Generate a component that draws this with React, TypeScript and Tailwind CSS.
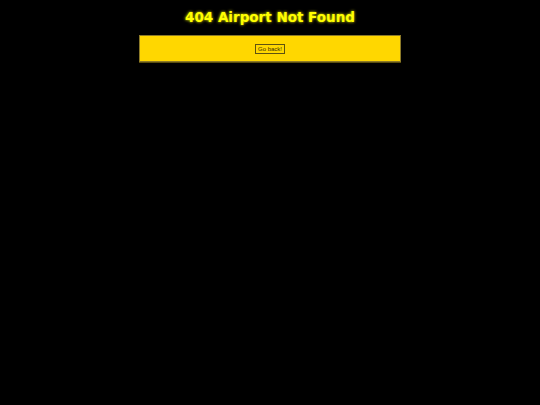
import React from 'react'

export default function App() {
  return (
    <div className="min-h-[405px] w-full bg-black pt-[7px]" style={{ fontFamily: '"DejaVu Sans", Verdana, sans-serif' }}>
      <h1 className="text-center text-[13.5px] font-bold leading-[21px] text-[#ffff00] [text-shadow:0_0_3px_#ffff00]">
        404 Airport Not Found
      </h1>
      <div className="mx-auto mt-[7px] flex h-[27px] w-[262px] items-center justify-center border border-[#8c7a28] bg-[#ffd700] shadow-[0_1px_0_#5a4d10]">
        <button
          className="h-[10px] border border-[#5f5210] bg-[#ffd700] px-[2px] text-[6px] leading-[8px] text-[#3a3000]"
          style={{ fontFamily: '"Liberation Sans", Arial, sans-serif' }}
        >
          Go back!
        </button>
      </div>
    </div>
  )
}
